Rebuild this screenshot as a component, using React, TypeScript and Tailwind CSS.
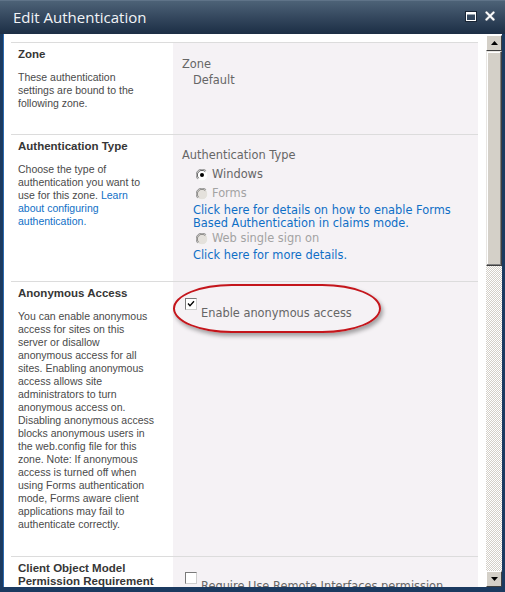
import type { ReactNode } from 'react';

const leftFont = "font-['Liberation_Sans',Arial,sans-serif]";
const rightFont = "font-['DejaVu_Sans',Verdana,sans-serif]";

function Radio({ checked, disabled }: { checked?: boolean; disabled?: boolean }) {
  return (
    <svg width="12" height="12" viewBox="0 0 12 12" className="shrink-0">
      <circle cx="6" cy="6" r="5.5" fill={disabled ? '#e4e1dc' : '#ffffff'} />
      <path d="M10.2 1.8 A5.5 5.5 0 0 0 1.8 10.2" fill="none" stroke="#8c8c8c" strokeWidth="1" />
      <path d="M9.3 2.7 A4.5 4.5 0 0 0 2.7 9.3" fill="none" stroke="#404040" strokeWidth="1" opacity={disabled ? 0.55 : 0.85} />
      <path d="M1.8 10.2 A5.5 5.5 0 0 0 10.2 1.8" fill="none" stroke="#f4f4f4" strokeWidth="1" />
      {checked && <circle cx="6" cy="6" r="2" fill="#000" />}
    </svg>
  );
}

function Check({ checked }: { checked?: boolean }) {
  return (
    <div className="w-[12px] h-[12px] shrink-0 bg-white border border-t-[#7a7a7a] border-l-[#7a7a7a] border-r-[#cfcfcf] border-b-[#cfcfcf] flex items-center justify-center">
      {checked && (
        <svg width="8" height="8" viewBox="0 0 8 8">
          <path d="M1 3.5 L3 5.8 L7 1.2" fill="none" stroke="#000" strokeWidth="1.3" />
        </svg>
      )}
    </div>
  );
}

function Lines({ lines }: { lines: ReactNode[] }) {
  return (
    <div className={`${leftFont} mt-[10px] text-[10.5px] leading-[13px] text-[#4a4a4a]`}>
      {lines.map((l, i) => (
        <div key={i} className="whitespace-nowrap">{l}</div>
      ))}
    </div>
  );
}

function Section({ title, lines, height, children }: { title: ReactNode; lines?: ReactNode[]; height: string; children: ReactNode }) {
  return (
    <div className={`flex border-t border-[#dcdcdc] ${height}`}>
      <div className="w-[162px] shrink-0 pl-[7px] pt-[5px]">
        <div className={`${leftFont} font-bold text-[11.5px] leading-[13px] text-[#363636]`}>{title}</div>
        {lines && <Lines lines={lines} />}
      </div>
      <div className={`relative flex-1 bg-[#f5f2f5] ${rightFont} text-[11.4px] leading-[13px] text-[#666]`}>{children}</div>
    </div>
  );
}

function ScrollButton({ down }: { down?: boolean }) {
  return (
    <div className="h-[16px] shrink-0 bg-[#d4d0c8] border border-t-white border-l-white border-r-[#404040] border-b-[#404040] flex items-center justify-center">
      <svg width="7" height="4" viewBox="0 0 7 4">
        <path d={down ? 'M0 0 H7 L3.5 4 Z' : 'M0 4 H7 L3.5 0 Z'} fill="#000" />
      </svg>
    </div>
  );
}

export default function App() {
  const link = 'text-[#0f6fc6]';
  return (
    <div className="w-[505px] h-[592px] flex flex-col bg-[#1b3a60] overflow-hidden">
      <div className="h-[34px] shrink-0 flex items-center justify-between bg-linear-to-b from-[#4d6277] to-[#1c2e45] border-t border-[#5f7388] pl-[13px] pr-[10px]">
        <span className="font-['Open_Sans',sans-serif] text-[15px] text-[#f2f4f7] pb-[1px]">Edit Authentication</span>
        <div className="flex items-center gap-[8px] pb-[3px]">
          <svg width="12" height="11" viewBox="0 0 12 11">
            <rect x="0.5" y="0.5" width="11" height="10" fill="none" stroke="#1a2636" />
            <rect x="1.5" y="1.5" width="9" height="8" fill="none" stroke="#fff" />
            <rect x="1.5" y="1.5" width="9" height="2" fill="#fff" />
          </svg>
          <svg width="10" height="10" viewBox="0 0 10 10">
            <path d="M1.5 1.5 L8.5 8.5 M8.5 1.5 L1.5 8.5" stroke="#5b6878" strokeWidth="3.6" strokeLinecap="square" />
            <path d="M1.5 1.5 L8.5 8.5 M8.5 1.5 L1.5 8.5" stroke="#fff" strokeWidth="1.8" strokeLinecap="square" />
          </svg>
        </div>
      </div>

      <div className="flex-1 min-h-0 flex mx-[3px] mb-[5px] bg-white border-l border-[#2d6bb0]">
        <div className="flex-1 min-h-0 overflow-hidden pl-[7px] pr-[8px] pt-[8px]">
          <Section
            height="h-[92px]"
            title="Zone"
            lines={['These authentication', 'settings are bound to the', 'following zone.']}
          >
            <div className="pl-[9px] pt-[15px]">
              <div>Zone</div>
              <div className="pl-[11px] mt-[3px]">Default</div>
            </div>
          </Section>

          <Section
            height="h-[147px]"
            title="Authentication Type"
            lines={[
              'Choose the type of',
              'authentication you want to',
              <>use for this zone. <span className={link}>Learn</span></>,
              <span className={link}>about configuring</span>,
              <span className={link}>authentication.</span>,
            ]}
          >
            <div className="pl-[9px] pt-[14px]">
              <div>Authentication Type</div>
              <div className="ml-[14px] mt-[6px] h-[13px] flex items-center gap-[4px]">
                <Radio checked />
                <span>Windows</span>
              </div>
              <div className="ml-[14px] mt-[6px] h-[13px] flex items-center gap-[4px] text-[#a3a3a3]">
                <Radio disabled />
                <span>Forms</span>
              </div>
              <div className={`ml-[11px] mt-[4px] ${link}`}>
                <div>Click here for details on how to enable Forms</div>
                <div>Based Authentication in claims mode.</div>
              </div>
              <div className="ml-[14px] mt-[2px] h-[13px] flex items-center gap-[4px] text-[#a3a3a3]">
                <Radio disabled />
                <span>Web single sign on</span>
              </div>
              <div className={`ml-[11px] mt-[4px] ${link}`}>Click here for more details.</div>
            </div>
          </Section>

          <Section
            height="h-[275px]"
            title="Anonymous Access"
            lines={[
              'You can enable anonymous',
              'access for sites on this',
              'server or disallow',
              'anonymous access for all',
              'sites. Enabling anonymous',
              'access allows site',
              'administrators to turn',
              'anonymous access on.',
              'Disabling anonymous access',
              'blocks anonymous users in',
              'the web.config file for this',
              'zone. Note: If anonymous',
              'access is turned off when',
              'using Forms authentication',
              'mode, Forms aware client',
              'applications may fail to',
              'authenticate correctly.',
            ]}
          >
            <div className="pl-[12px] pt-[16px] flex items-start gap-[4px]">
              <Check checked />
              <span className="pt-[9px]">Enable anonymous access</span>
            </div>
            <div className="absolute left-0 top-[2px] w-[208px] h-[49px] rounded-[60px/25px] border-2 border-[#c4161c] shadow-[2px_3px_4px_rgba(0,0,0,0.35)]" />
          </Section>

          <Section
            height="h-[60px]"
            title={<>Client Object Model<br />Permission Requirement</>}
          >
            <div className="pl-[12px] pt-[15px] flex items-start gap-[4px]">
              <Check />
              <span className="pt-[8px] whitespace-nowrap">Require Use Remote Interfaces permission</span>
            </div>
          </Section>
        </div>

        <div className="w-[16px] shrink-0 flex flex-col pt-[1px]">
          <ScrollButton />
          <div className="h-[215px] shrink-0 bg-[#d4d0c8] border border-t-[#e8e6e2] border-l-[#e8e6e2] border-r-[#404040] border-b-[#404040] shadow-[inset_-1px_-1px_0_#808080,inset_1px_1px_0_#ffffff]" />
          <div className="flex-1 bg-[image:repeating-conic-gradient(#d4d0c8_0_25%,#ffffff_0_50%)] bg-[length:2px_2px]" />
          <ScrollButton down />
        </div>
      </div>
    </div>
  );
}
